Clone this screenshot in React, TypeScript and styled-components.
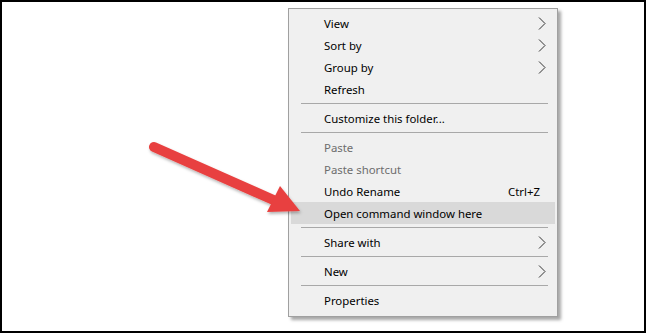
import React from "react";
import styled, { createGlobalStyle } from "styled-components";

const Global = createGlobalStyle`
  html, body { margin: 0; padding: 0; background: #fff; }
  body { font-family: "Segoe UI", "Noto Sans", "Open Sans", sans-serif; }
`;

const Frame = styled.div`
  position: relative;
  box-sizing: border-box;
  width: 646px;
  height: 333px;
  border: 2px solid #000;
  background: #fff;
  padding: 6px 0 0 286px;
  overflow: hidden;
`;

const Menu = styled.div`
  box-sizing: border-box;
  width: 270px;
  background: #f0f0f0;
  border: 1px solid #a0a0a0;
  padding: 3px 1px 5px 1px;
  box-shadow: 3px 3px 3px rgba(0, 0, 0, 0.35);
  display: flex;
  flex-direction: column;
`;

const Item = styled.div<{ $disabled?: boolean; $active?: boolean }>`
  height: 22px;
  display: flex;
  align-items: center;
  padding: 0 9px 0 33px;
  margin: 0 1px;
  font-size: 11.4px;
  color: ${(p) => (p.$disabled ? "#6d6d6d" : "#000")};
  background: ${(p) => (p.$active ? "#d9d9d9" : "transparent")};
`;

const Label = styled.span`
  flex: 1;
  white-space: nowrap;
`;

const Shortcut = styled.span`
  padding-right: 6px;
`;

const Separator = styled.div`
  height: 7px;
  display: flex;
  align-items: center;
  padding: 0 8px 0 11px;
  &::after {
    content: "";
    flex: 1;
    height: 1px;
    background: #a8a8a8;
  }
`;

const Chevron = () => (
  <svg width="8" height="13" viewBox="0 0 8 13">
    <path d="M1 0.5 L7 6.5 L1 12.5" fill="none" stroke="#333" strokeWidth="1" />
  </svg>
);

const Arrow = styled.svg`
  position: absolute;
  left: 0;
  top: 0;
  pointer-events: none;
`;

type Entry =
  | { sep: true }
  | { label: string; sub?: boolean; disabled?: boolean; active?: boolean; shortcut?: string };

const entries: Entry[] = [
  { label: "View", sub: true },
  { label: "Sort by", sub: true },
  { label: "Group by", sub: true },
  { label: "Refresh" },
  { sep: true },
  { label: "Customize this folder..." },
  { sep: true },
  { label: "Paste", disabled: true },
  { label: "Paste shortcut", disabled: true },
  { label: "Undo Rename", shortcut: "Ctrl+Z" },
  { label: "Open command window here", active: true },
  { sep: true },
  { label: "Share with", sub: true },
  { sep: true },
  { label: "New", sub: true },
  { sep: true },
  { label: "Properties" },
];

export default function App() {
  return (
    <>
      <Global />
      <Frame>
        <Menu>
          {entries.map((e, i) =>
            "sep" in e ? (
              <Separator key={i} />
            ) : (
              <Item key={i} $disabled={e.disabled} $active={e.active}>
                <Label>{e.label}</Label>
                {e.shortcut && <Shortcut>{e.shortcut}</Shortcut>}
                {e.sub && <Chevron />}
              </Item>
            )
          )}
        </Menu>
        <Arrow width="646" height="333" viewBox="0 0 646 333">
          <defs>
            <filter id="sh" x="-20%" y="-20%" width="140%" height="140%">
              <feDropShadow dx="1" dy="2" stdDeviation="1.5" floodColor="#000" floodOpacity="0.3" />
            </filter>
          </defs>
          <g filter="url(#sh)">
            <line x1="152" y1="145" x2="276" y2="200" stroke="#e8413f" strokeWidth="10" strokeLinecap="round" />
            <polygon points="265,210 278,184 298,209" fill="#e8413f" />
          </g>
        </Arrow>
      </Frame>
    </>
  );
}
